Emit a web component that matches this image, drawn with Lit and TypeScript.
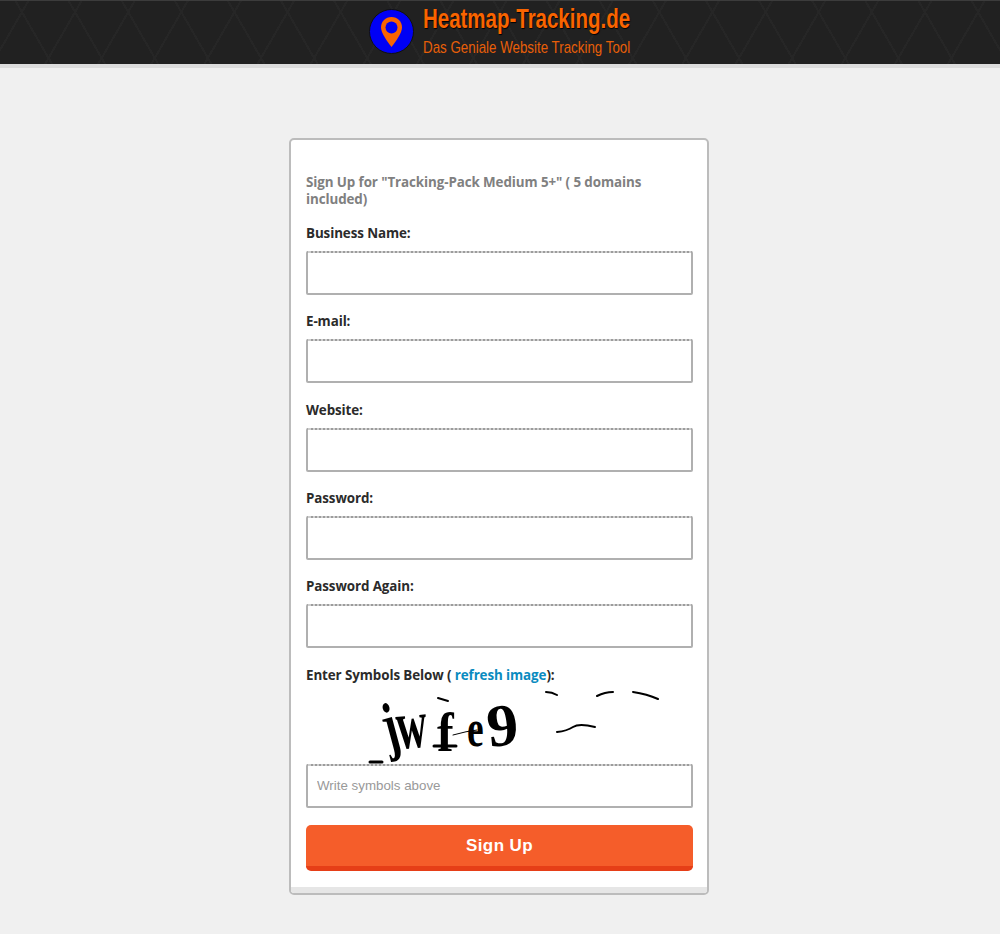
import { LitElement, html, css, svg } from "lit";
import { customElement } from "lit/decorators.js";

const fields: [string, string][] = [
  ["Business Name:", "text"],
  ["E-mail:", "email"],
  ["Website:", "text"],
  ["Password:", "password"],
  ["Password Again:", "password"],
];

@customElement("app-root")
export class AppRoot extends LitElement {
  static styles = css`
    :host { display: block; min-height: 934px; background: #f0f0f0; font-family: "Open Sans", sans-serif; }
    .top {
      height: 63px; border-top: 1px solid #3c3c3c; border-bottom: 4px solid #dcdcdc;
      background-color: #212121;
      background-image:
        repeating-linear-gradient(60deg, transparent 0 44px, #262626 44px 46px),
        repeating-linear-gradient(-60deg, transparent 0 44px, #262626 44px 46px);
      display: flex; justify-content: center; align-items: flex-start;
      margin-bottom: 70px;
    }
    .brand { display: flex; align-items: flex-start; gap: 9px; width: 262px; }
    .mark { width: 45px; height: 45px; margin-top: 8px; flex: none; display: block; }
    .words { display: flex; flex-direction: column; color: #f96400; font-family: "Liberation Sans", Arial, sans-serif; white-space: nowrap; }
    .h1 { font-size: 28px; font-weight: 700; line-height: 32px; margin-top: 2px; transform: scaleX(.731); transform-origin: left; text-shadow: 1px 1px 1px #000; }
    .h2 { font-size: 17px; line-height: 20px; margin-top: 3px; transform: scaleX(.785); transform-origin: left; color: #e85f08; }
    .card {
      width: 420px; height: 757px; box-sizing: border-box; margin: 0 0 0 289px;
      background: #fff; border: 2px solid #bcbcbc; border-radius: 5px;
      display: flex; flex-direction: column; overflow: hidden;
    }
    form { flex: 1; padding: 34px 15px 0; display: flex; flex-direction: column; }
    h2 { margin: 0 0 14px; font-size: 13.4px; letter-spacing: -.1px; line-height: 17px; font-weight: 700; color: #808080; }
    .field { display: flex; flex-direction: column; margin-bottom: 15.33px; }
    label { font-size: 13.4px; letter-spacing: -.1px; font-weight: 700; line-height: 20px; padding-top: 1px; color: #2b2b2b; margin-bottom: 8px; }
    label a { color: #0a8bc0; text-decoration: none; }
    input {
      box-sizing: border-box; width: 387px; height: 44px; padding: 0 9px; margin: 0;
      border: 2px solid #b0b0b0; border-top: 2px dotted #9c9c9c; border-radius: 2px; outline: none;
      background: linear-gradient(#cfcfcf 2px, #fff 2px) border-box;
      font: 13.33px "Liberation Sans", Arial, sans-serif; color: #333;
    }
    input::placeholder { color: #999; opacity: 1; }
    .captcha { display: block; width: 387px; height: 73px; margin-top: -2px; overflow: visible; }
    .captcha-text { font: 700 50px "Liberation Serif", serif; fill: #000; }
    .go {
      margin-top: 17px; width: 387px; height: 46px; box-sizing: border-box; padding: 2px 0 0;
      background: #f55d2a; color: #fff; border: 0; border-bottom: 5px solid #e63e17; border-radius: 5px;
      font: 700 17px "Liberation Sans", Arial, sans-serif; letter-spacing: .4px;
    }
    .lip { height: 6px; flex: none; background: #e6e6e6; }
  `;

  private captcha() {
    return svg`
      <g stroke="#000" fill="none" stroke-linecap="round">
        <path d="M64 71 h12" stroke-width="3"/>
        <path d="M132 7 l10 3" stroke-width="2"/>
        <path d="M240 1 q6 0 11 3" stroke-width="2"/>
        <path d="M291 5 q8-4 16-4" stroke-width="2"/>
        <path d="M327 1 q14 2 25 7" stroke-width="2"/>
        <path d="M251 41 q10-1 16-5 t22 0" stroke-width="2"/>
        <path d="M147 44 q14-4 24-5" stroke-width="1"/>
        <path d="M128 55 h22" stroke-width="3"/>
      </g>
      <text class="captcha-text" transform="translate(82 58) rotate(-15) scale(.9 1.3)">j</text>
      <text class="captcha-text" transform="translate(92 58) rotate(-5) scale(.85 1.4)">w</text>
      <text class="captcha-text" transform="translate(131 60) scale(1 1.1)">f</text>
      <text class="captcha-text" transform="translate(161 55) scale(.75 1.05)">e</text>
      <text class="captcha-text" transform="translate(183 56) rotate(-6) scale(1.25 1.2)">9</text>`;
  }

  render() {
    return html`
      <header class="top">
        <div class="brand">
          <svg class="mark" viewBox="0 0 45 45">
            <circle cx="22.5" cy="22.5" r="22" fill="#0000f5" stroke="#111" stroke-width="1"/>
            <path fill="#f96400" d="M22.5 8c-6 0-10.500 4.500-10.500 10.500 0 5 6 14 10.500 19.500 4.500-5.500 10.500-14.500 10.500-19.500C33 12.500 28.500 8 22.500 8z"/>
            <circle cx="22.500" cy="18.500" r="6" fill="#0000f5"/>
          </svg>
          <div class="words">
            <span class="h1">Heatmap-Tracking.de</span>
            <span class="h2">Das Geniale Website Tracking Tool</span>
          </div>
        </div>
      </header>
      <main class="card">
        <form @submit=${(e: Event) => e.preventDefault()}>
          <h2>Sign Up for "Tracking-Pack Medium 5+" ( 5 domains included)</h2>
          ${fields.map(([l, t]) => html`<div class="field"><label>${l}</label><input type=${t} /></div>`)}
          <label>Enter Symbols Below ( <a href="#">refresh image</a>):</label>
          <svg class="captcha" viewBox="0 0 387 73">${this.captcha()}</svg>
          <input type="text" placeholder="Write symbols above" />
          <button class="go" type="submit">Sign Up</button>
        </form>
        <div class="lip"></div>
      </main>
    `;
  }
}
